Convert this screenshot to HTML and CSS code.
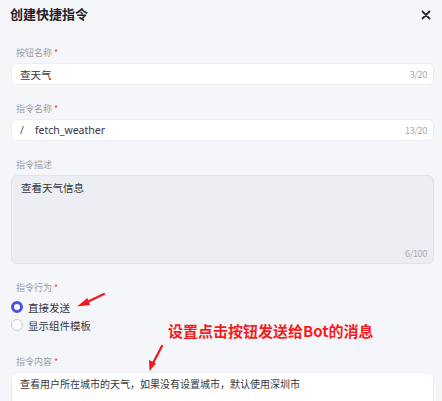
FILE: index.html
```html
<!DOCTYPE html>
<html lang="zh">
<head>
<meta charset="utf-8">
<link rel="stylesheet" href="styles.css">
</head>
<body>
<div class="panel">
  <div class="header">
    <div class="title">创建快捷指令</div>
    <svg class="close" width="10" height="10" viewBox="0 0 10 10"><path d="M1.5 1.5 L8.5 8.5 M8.5 1.5 L1.5 8.5" stroke="#2a2b30" stroke-width="1.8" stroke-linecap="round"/></svg>
  </div>
  <div class="form">
    <div class="field">
      <div class="label">按钮名称 <span class="req">*</span></div>
      <div class="input"><span class="value">查天气</span><span class="count">3/20</span></div>
    </div>
    <div class="field">
      <div class="label">指令名称 <span class="req">*</span></div>
      <div class="input"><span class="slash">/</span><span class="value latin">fetch_weather</span><span class="count">13/20</span></div>
    </div>
    <div class="field">
      <div class="label">指令描述</div>
      <div class="textarea"><span class="value">查看天气信息</span><span class="count">6/100</span></div>
    </div>
    <div class="field radios-field">
      <div class="label">指令行为 <span class="req">*</span></div>
      <div class="radio"><span class="dot checked"></span><span>直接发送</span></div>
      <div class="radio"><span class="dot"></span><span>显示组件模板</span></div>
    </div>
    <div class="field content-field">
      <div class="label">指令内容 <span class="req">*</span></div>
      <div class="input tall"><span class="value small">查看用户所在城市的天气，如果没有设置城市，默认使用深圳市</span></div>
    </div>
  </div>
  <div class="note">设置点击按钮发送给Bot的消息</div>
  <svg class="arrows" width="442" height="401" viewBox="0 0 442 401">
    <path d="M104 294 L84 303.5" stroke="#f21818" stroke-width="2.2" stroke-linecap="round"/>
    <path d="M77 306.5 L87.5 298 L90 305 Z" fill="#f21818"/>
    <path d="M162 346 L152.5 364" stroke="#f21818" stroke-width="2.2" stroke-linecap="round"/>
    <path d="M149.5 371 L149 360 L156 363.5 Z" fill="#f21818"/>
  </svg>
</div>
</body>
</html>
```
FILE: styles.css
```css
* { box-sizing: border-box; }
html, body { margin: 0; padding: 0; }
body {
  width: 442px;
  height: 401px;
  overflow: hidden;
  background: #f5f6fa;
  font-family: "Noto Sans CJK SC", "Noto Sans", sans-serif;
  color: #26272d;
}
.panel { position: relative; width: 442px; height: 401px; }
.header {
  display: flex;
  align-items: center;
  justify-content: space-between;
  height: 28px;
  padding: 0 11px 0 10px;
}
.title { font-size: 13px; font-weight: 600; color: #1f2026; line-height: 20px; }
.close { display: block; margin-top: 1px; }
.form { padding: 19px 8px 0 11px; display: flex; flex-direction: column; gap: 18px; }
.field { display: flex; flex-direction: column; }
.content-field { margin-top: 4px; }
.label {
  font-size: 9px;
  line-height: 12px;
  color: #9b9ca4;
  padding-left: 5px;
  margin-bottom: 4px;
}
.req { color: #f0474a; }
.input {
  height: 22px;
  background: #ffffff;
  border: 1px solid #eceef3;
  border-radius: 6px;
  display: flex;
  align-items: center;
  padding: 0 6px 0 8px;
  font-size: 10.5px;
}
.value { flex: 1; color: #35363c; }
.value.small { font-size: 10px; }
.latin { font-family: "Noto Sans", sans-serif; }
.slash { color: #55565d; margin-right: 11px; font-family: "Noto Sans", sans-serif; }
.count { font-size: 9px; color: #a9aab2; letter-spacing: -0.3px; }
.textarea {
  height: 89px;
  background: #edeef3;
  border: 1px solid #e1e2e8;
  border-radius: 6px;
  display: flex;
  flex-direction: column;
  padding: 4px 6px 3px 9px;
  font-size: 10.5px;
}
.textarea .value { line-height: 16px; }
.textarea .count { align-self: flex-end; }
.radio {
  display: flex;
  align-items: center;
  height: 18px;
  font-size: 10.5px;
  color: #35363c;
  gap: 5px;
}
.dot {
  width: 12px;
  height: 12px;
  border-radius: 50%;
  border: 1px solid #c9cad2;
  background: #fff;
}
.dot.checked { border: 3.5px solid #4c52e6; background: #fff; }
.tall { height: 44px; align-items: flex-start; padding-top: 3px; }
.note {
  position: absolute;
  left: 168px;
  top: 321px;
  font-size: 15px;
  font-weight: 700;
  color: #f51c1c;
  line-height: 20px;
}
.arrows { position: absolute; left: 0; top: 0; pointer-events: none; }
```
